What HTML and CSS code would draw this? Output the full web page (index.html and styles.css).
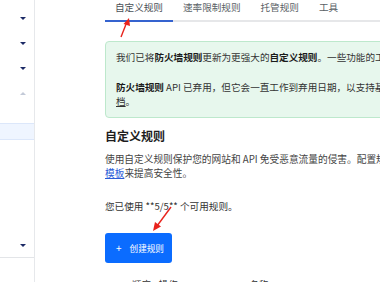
FILE: index.html
```html
<!DOCTYPE html>
<html lang="zh-CN">
<head>
<meta charset="utf-8">
<link rel="stylesheet" href="styles.css">
</head>
<body>
<div class="app">
  <aside class="sidebar">
    <div class="nav-item"><span class="caret"></span></div>
    <div class="nav-item"><span class="caret"></span></div>
    <div class="nav-item"><span class="caret"></span></div>
    <div class="nav-item"><span class="caret caret-up"></span></div>
    <div class="nav-active"></div>
    <div class="nav-item nav-last"><span class="caret"></span></div>
  </aside>
  <main class="main">
    <nav class="tabs">
      <span class="tab tab-active">自定义规则</span>
      <span class="tab">速率限制规则</span>
      <span class="tab">托管规则</span>
      <span class="tab">工具</span>
    </nav>
    <div class="banner">
      <p class="banner-p">我们已将<b>防火墙规则</b>更新为更强大的<b>自定义规则</b>。一些功能的工作方式已发生变化。</p>
      <p class="banner-p"><b>防火墙规则</b> API 已弃用，但它会一直工作到弃用日期，以支持基于防火墙规则的现有配置。请参阅<a class="doc-link">文<br>档</a>。</p>
    </div>
    <h2 class="title">自定义规则</h2>
    <p class="desc">使用自定义规则保护您的网站和 API 免受恶意流量的侵害。配置规则或使用<br><a class="link">模板</a>来提高安全性。</p>
    <p class="usage">您已使用 **5/5** 个可用规则。</p>
    <button class="btn"><span class="plus">+</span>创建规则</button>
    <div class="thead">
      <span class="th th-1">顺序</span>
      <span class="th th-2">操作</span>
      <span class="th th-3">名称</span>
    </div>
  </main>
</div>
<svg class="arrow arrow-1" width="20" height="22" viewBox="0 0 20 22">
  <line x1="4" y1="20" x2="9.5" y2="6" stroke="#e8231c" stroke-width="1.4"/>
  <polygon points="12,1 13,9 6.5,7" fill="#e8231c"/>
</svg>
<svg class="arrow arrow-2" width="24" height="28" viewBox="0 0 24 28">
  <line x1="21" y1="2" x2="7" y2="21" stroke="#e8231c" stroke-width="1.4"/>
  <polygon points="3,26 5,17 11,21.5" fill="#e8231c"/>
</svg>
</body>
</html>
```
FILE: styles.css
```css
html, body {
  margin: 0;
  padding: 0;
  background: #ffffff;
}
body {
  width: 380px;
  height: 282px;
  overflow: hidden;
  position: relative;
  font-family: "Noto Sans CJK SC", "Noto Sans", "Liberation Sans", sans-serif;
  color: #333333;
}
.app {
  display: flex;
  height: 282px;
}
.sidebar {
  width: 34px;
  flex: none;
  border-right: 1px solid #e6e8eb;
  padding-top: 6px;
  display: flex;
  flex-direction: column;
}
.nav-item {
  height: 25px;
  display: flex;
  align-items: center;
  justify-content: flex-end;
  padding-right: 8px;
}
.caret {
  width: 0;
  height: 0;
  border-left: 3px solid transparent;
  border-right: 3px solid transparent;
  border-top: 3px solid #1c2a66;
}
.caret-up {
  border-top: 0;
  border-bottom: 3px solid #c3cad8;
}
.nav-active {
  margin-top: 17px;
  height: 15px;
  background: #eff5ff;
  border-top: 1px solid #dce7fa;
  border-bottom: 1px solid #dce7fa;
}
.nav-last {
  margin-top: 94px;
  height: 23px;
  border-bottom: 1px solid #e3e5e8;
}
.main {
  flex: none;
  width: 560px;
  padding-left: 70px;
}
.tabs {
  display: flex;
  border-bottom: 2px solid #e6e7e9;
  height: 20px;
}
.tab {
  font-size: 9.6px;
  line-height: 14px;
  padding: 0 10px;
  height: 20px;
  color: #5a5f66;
  white-space: nowrap;
}
.tab-active {
  border-bottom: 2px solid #3563cf;
  color: #4a4f56;
}
.banner {
  margin-top: 19px;
  border: 1px solid #bde8cc;
  background: #e7f7ed;
  border-radius: 4px;
  padding: 8px 10px 9px;
}
.banner-p {
  margin: 0;
  font-size: 9.6px;
  line-height: 14px;
  white-space: nowrap;
  color: #333;
}
.banner-p + .banner-p {
  margin-top: 16px;
}
.banner-p b {
  color: #1b1b1b;
}
.doc-link {
  color: #333;
  text-decoration: underline;
}
.title {
  margin: 9px 0 0;
  font-size: 12px;
  line-height: 18px;
  font-weight: 700;
  color: #1d1d1d;
}
.desc {
  margin: 7px 0 0;
  font-size: 9.7px;
  line-height: 14px;
  white-space: nowrap;
  color: #444;
}
.link {
  color: #2b5bd7;
  text-decoration: underline;
}
.usage {
  margin: 19px 0 0;
  font-size: 9.6px;
  line-height: 15px;
  color: #333;
}
.btn {
  display: flex;
  align-items: center;
  margin-top: 19px;
  width: 67px;
  height: 30px;
  padding: 0 0 0 11px;
  border: 0;
  border-radius: 3px;
  background: #0b6cff;
  color: #ffffff;
  font-family: inherit;
  font-size: 8.6px;
  line-height: 12px;
}
.plus {
  font-size: 10px;
  margin-right: 8px;
}
.thead {
  margin-top: 14px;
  display: flex;
  font-size: 9.4px;
  line-height: 14px;
  color: #333;
}
.th-1 { margin-left: 27px; }
.th-2 { margin-left: 8px; }
.th-3 { margin-left: 72px; }
.arrow {
  position: absolute;
}
.arrow-1 {
  left: 117px;
  top: 17px;
}
.arrow-2 {
  left: 150px;
  top: 205px;
}
```
